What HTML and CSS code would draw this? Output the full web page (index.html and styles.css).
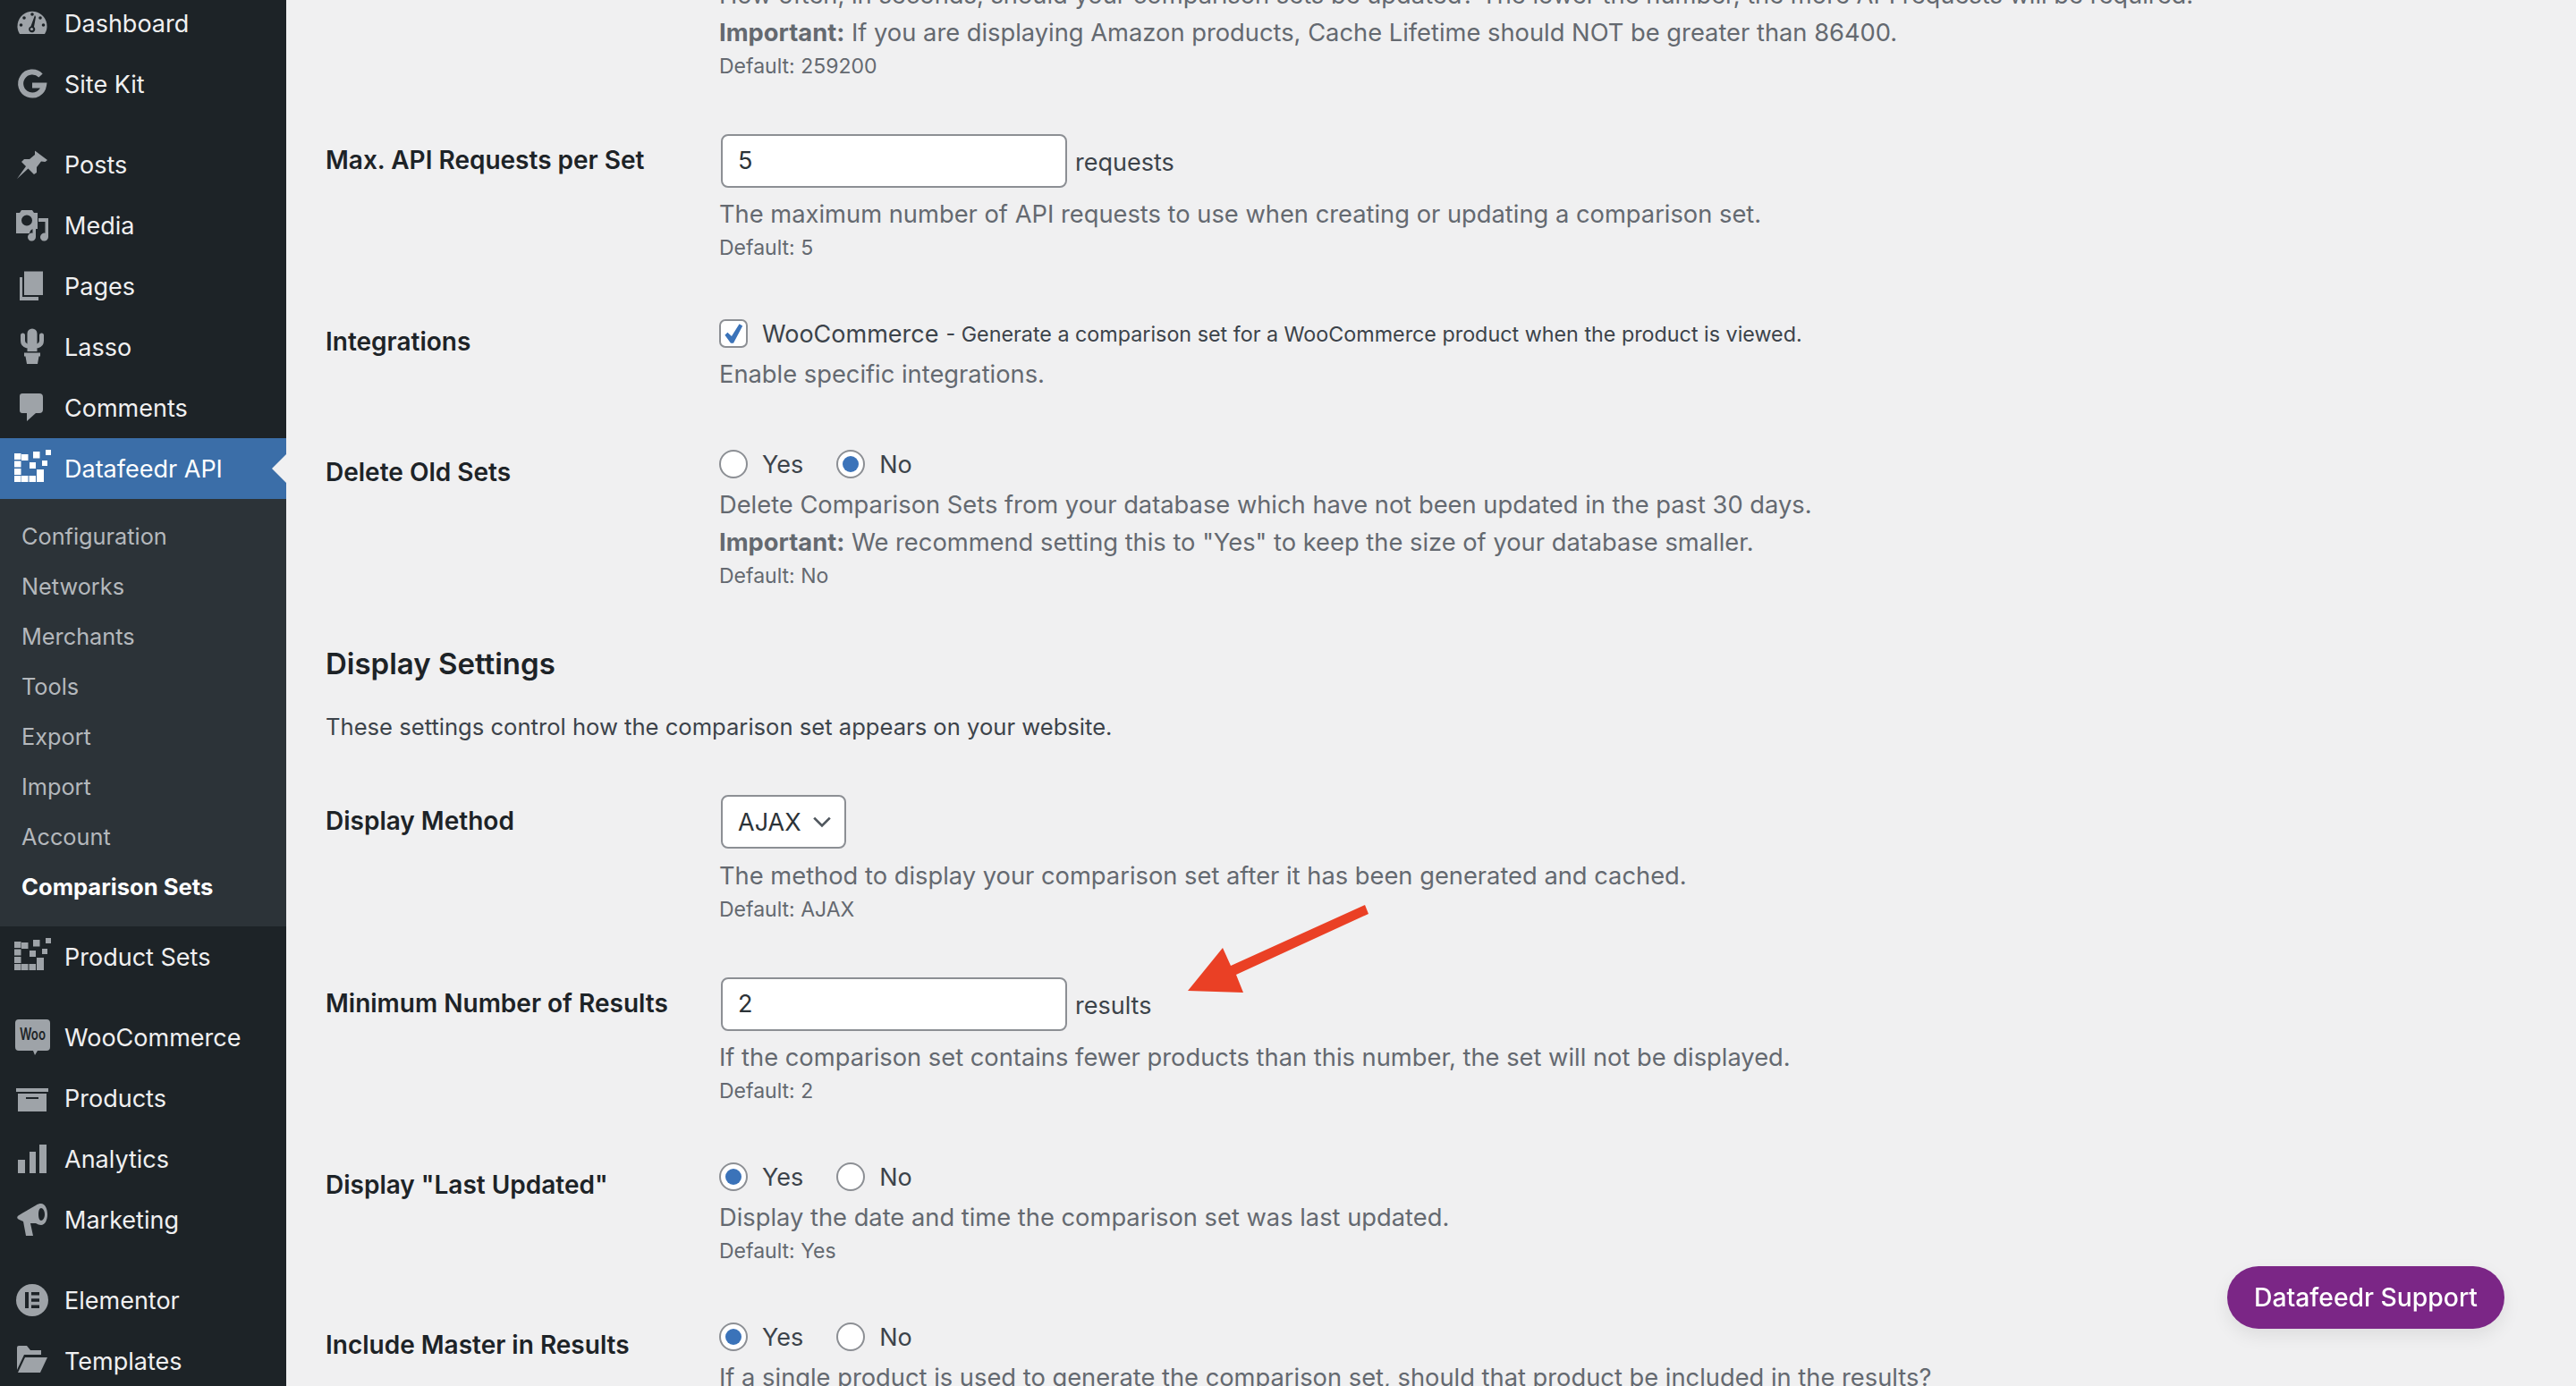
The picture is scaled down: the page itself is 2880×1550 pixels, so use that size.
FILE: index.html
```html
<!DOCTYPE html>
<html lang="en">

<head>
    <meta charset="UTF-8" />
    <title>Comparison Sets</title>
    <link rel="stylesheet" href="styles.css">
</head>

<body>
    <svg class="defs" width="0" height="0">
        <symbol id="pixels" viewBox="0 0 40 40" overflow="visible">
            <rect x="0" y="3" width="7.5" height="7" /><rect x="8" y="4" width="7.5" height="7" />
            <rect x="21" y="1" width="7.5" height="7.5" /><rect x="35" y="-1" width="6" height="6" />
            <rect x="0" y="11.5" width="7.5" height="7" /><rect x="17" y="13" width="7" height="7" />
            <rect x="31" y="11" width="6" height="6" /><rect x="0" y="20" width="7.5" height="7" />
            <rect x="25" y="21" width="8" height="7" /><rect x="0" y="28" width="7.5" height="7" />
            <rect x="8" y="28" width="7.5" height="7" /><rect x="16.5" y="28" width="7.5" height="7" />
            <rect x="25" y="28" width="8" height="7" />
        </symbol>
    </svg>

    <div class="layout">
        <nav class="sidebar">
            <div class="menu-group">
                <a class="menu-item">
                    <svg class="icon" viewBox="0 0 40 40"><path d="M6 32A16.5 16.5 0 1 1 34 32Z" /><g class="cut"><circle cx="20" cy="10" r="1.8" /><circle cx="11" cy="14" r="1.8" /><circle cx="29" cy="14" r="1.8" /><circle cx="7.5" cy="22" r="1.8" /><circle cx="32.5" cy="22" r="1.8" /><path d="M23 11 L24 13 L22 24 A3.6 3.6 0 1 1 18.4 23.4Z" /></g><circle cx="19.5" cy="26.5" r="1.6" /></svg>
                    <span>Dashboard</span>
                </a>
                <a class="menu-item">
                    <svg class="icon" viewBox="0 0 40 40"><path class="stroke" d="M29.5 10.5A13 13 0 1 0 33 21.5H20" stroke-width="6" /></svg>
                    <span>Site Kit</span>
                </a>
            </div>
            <div class="menu-group">
                <a class="menu-item">
                    <svg class="icon" viewBox="0 0 40 40"><path d="M21 3L37 15 34.500 17 30 16.500 25 23 25 29 22 31 15.500 24.500 3 36 13 22 8 17 11 14 17 14 23 9 23 4.500Z" /></svg>
                    <span>Posts</span>
                </a>
                <a class="menu-item">
                    <svg class="icon" viewBox="0 0 40 40"><path fill-rule="evenodd" d="M8 3H20L22 6H26V24H21A6 6 0 0 0 17 29H2V6H6ZM14 8.500A6 6 0 1 0 14 20.500 6 6 0 0 0 14 8.500Z" /><path d="M27 12H38V33A4.500 4.500 0 1 1 34.500 28.700V16H27Z" /><path d="M24 23V33A4.500 4.500 0 1 1 20.500 28.700V23Z" /></svg>
                    <span>Media</span>
                </a>
                <a class="menu-item">
                    <svg class="icon" viewBox="0 0 40 40"><path d="M11 3.500H32V30H11Z" /><path d="M6 10H9V32H27V36H6Z" /></svg>
                    <span>Pages</span>
                </a>
                <a class="menu-item">
                    <svg class="icon" viewBox="0 0 40 40"><path d="M14.500 5A5.500 5.500 0 0 1 25.500 5V25H14.500Z" /><path class="stroke" d="M9.500 7V13A6 6 0 0 0 14 18.800M30.500 7V13A6 6 0 0 1 26 18.800" stroke-width="5" stroke-linecap="round" /><path d="M11 26.500H29V30.500H27.500L26 39H14L12.500 30.500H11Z" /></svg>
                    <span>Lasso</span>
                </a>
                <a class="menu-item">
                    <svg class="icon" viewBox="0 0 40 40"><path d="M9 4H28A4 4 0 0 1 32 8V22A4 4 0 0 1 28 26H24L14 35V26H9A3 3 0 0 1 6 23V7A3 3 0 0 1 9 4Z" /></svg>
                    <span>Comments</span>
                </a>
                <a class="menu-item active">
                    <svg class="icon"><use href="#pixels" /></svg>
                    <span>Datafeedr API</span>
                </a>
                <div class="submenu">
                    <a>Configuration</a>
                    <a>Networks</a>
                    <a>Merchants</a>
                    <a>Tools</a>
                    <a>Export</a>
                    <a>Import</a>
                    <a>Account</a>
                    <a class="current">Comparison Sets</a>
                </div>
                <a class="menu-item">
                    <svg class="icon pixels-dim"><use href="#pixels" /></svg>
                    <span>Product Sets</span>
                </a>
            </div>
            <div class="menu-group">
                <a class="menu-item">
                    <svg class="icon" viewBox="0 0 40 40"><path d="M5 0H36A4 4 0 0 1 40 4V31A4 4 0 0 1 36 35H26L23 40 21 35H5A4 4 0 0 1 1 31V4A4 4 0 0 1 5 0Z" /><text class="woo" x="6" y="23" textLength="29" lengthAdjust="spacingAndGlyphs">Woo</text></svg>
                    <span>WooCommerce</span>
                </a>
                <a class="menu-item">
                    <svg class="icon" viewBox="0 0 40 40"><path d="M2 9H38V13H2Z" /><path fill-rule="evenodd" d="M4 15H36V35H4ZM13 19V21H27V19Z" /></svg>
                    <span>Products</span>
                </a>
                <a class="menu-item">
                    <svg class="icon" viewBox="0 0 40 40"><path d="M4 21H12V36H4ZM17 12H24V36H17ZM28 4H36V36H28Z" /></svg>
                    <span>Analytics</span>
                </a>
                <a class="menu-item">
                    <svg class="icon" viewBox="0 0 40 40"><path fill-rule="evenodd" d="M30 2C34 2 37 7 37 14 37 21 34 26 30 26 28 26 26 25 24 24L18 24 21 38 13 38 10 22 5.500 20C3 19 2.500 17 4.500 15.500 10 12 17 8 24 4 26 2.500 28 2 30 2ZM30 7C28 7 27 10 27 14 27 18 28 21 30 21 32 21 34 18 34 14 34 10 32 7 30 7Z" /></svg>
                    <span>Marketing</span>
                </a>
            </div>
            <div class="menu-group">
                <a class="menu-item">
                    <svg class="icon" viewBox="0 0 40 40"><circle cx="20" cy="20" r="18" /><path class="cut" d="M12 11H16V29H12ZM19 11H28V14.500H19ZM19 18.200H28V21.800H19ZM19 25.500H28V29H19Z" /></svg>
                    <span>Elementor</span>
                </a>
                <a class="menu-item">
                    <svg class="icon" viewBox="0 0 40 40"><path d="M3 30V5A2 2 0 0 1 5 3H14L18 8H30V13H11Z" /><path d="M12 16H37L29 33H4Z" /></svg>
                    <span>Templates</span>
                </a>
            </div>
        </nav>

        <main class="content">
            <section class="row">
                <div class="label"></div>
                <div class="field">
                    <p class="desc">How often, in seconds, should your comparison sets be updated? The lower the number, the more API requests will be required.</p>
                    <p class="desc"><b>Important:</b> If you are displaying Amazon products, Cache Lifetime should NOT be greater than 86400.</p>
                    <p class="default">Default: 259200</p>
                </div>
            </section>

            <section class="row">
                <div class="label">Max. API Requests per Set</div>
                <div class="field">
                    <div class="control-text">
                        <div class="text-input">5</div>
                        <span class="unit">requests</span>
                    </div>
                    <p class="desc">The maximum number of API requests to use when creating or updating a comparison set.</p>
                    <p class="default">Default: 5</p>
                </div>
            </section>

            <section class="row">
                <div class="label">Integrations</div>
                <div class="field">
                    <div class="control-line">
                        <span class="checkbox"><svg viewBox="0 0 20 20"><path d="M15.500 1L18.500 3 10 19H7.500L2 11.500 4.500 9 8.300 12.500Z" /></svg></span>
                        <span class="option">WooCommerce</span>
                        <span class="option-note">- Generate a comparison set for a WooCommerce product when the product is viewed.</span>
                    </div>
                    <p class="desc">Enable specific integrations.</p>
                </div>
            </section>

            <section class="row">
                <div class="label">Delete Old Sets</div>
                <div class="field">
                    <div class="control-line">
                        <span class="radio"></span><span class="option">Yes</span>
                        <span class="radio checked"></span><span class="option">No</span>
                    </div>
                    <p class="desc">Delete Comparison Sets from your database which have not been updated in the past 30 days.</p>
                    <p class="desc"><b>Important:</b> We recommend setting this to "Yes" to keep the size of your database smaller.</p>
                    <p class="default">Default: No</p>
                </div>
            </section>

            <h2 class="section-title">Display Settings</h2>
            <p class="section-intro">These settings control how the comparison set appears on your website.</p>

            <section class="row">
                <div class="label">Display Method</div>
                <div class="field">
                    <div class="select-box">AJAX
                        <svg viewBox="0 0 20 20"><path d="M2 6L10 14 18 6" /></svg>
                    </div>
                    <p class="desc">The method to display your comparison set after it has been generated and cached.</p>
                    <p class="default">Default: AJAX</p>
                </div>
            </section>

            <section class="row">
                <div class="label">Minimum Number of Results</div>
                <div class="field">
                    <div class="control-text">
                        <div class="text-input">2</div>
                        <span class="unit">results</span>
                    </div>
                    <p class="desc">If the comparison set contains fewer products than this number, the set will not be displayed.</p>
                    <p class="default">Default: 2</p>
                </div>
            </section>

            <section class="row">
                <div class="label">Display "Last Updated"</div>
                <div class="field">
                    <div class="control-line">
                        <span class="radio checked"></span><span class="option">Yes</span>
                        <span class="radio"></span><span class="option">No</span>
                    </div>
                    <p class="desc">Display the date and time the comparison set was last updated.</p>
                    <p class="default">Default: Yes</p>
                </div>
            </section>

            <section class="row">
                <div class="label">Include Master in Results</div>
                <div class="field">
                    <div class="control-line">
                        <span class="radio checked"></span><span class="option">Yes</span>
                        <span class="radio"></span><span class="option">No</span>
                    </div>
                    <p class="desc">If a single product is used to generate the comparison set, should that product be included in the results?</p>
                </div>
            </section>
        </main>
    </div>

    <svg class="arrow" viewBox="1320 1005 220 115"><path d="M1526 1012L1530 1022 1382 1090 1390 1110 1328 1108 1367 1060 1376 1080Z" /></svg>

    <a class="support">Datafeedr Support</a>
</body>

</html>
```

FILE: styles.css
```css
html,
body {
    margin: 0;
    padding: 0;
    height: 100%;
    overflow: hidden;
    font-family: Inter, "Liberation Sans", sans-serif;
    background-color: #f0f0f1;
    color: #1d2327;
}

.defs {
    position: absolute;
}

.layout {
    display: flex;
    height: 100vh;
    overflow: hidden;
}

/* sidebar */
.sidebar {
    flex: 0 0 320px;
    background-color: #1d2327;
    color: #f0f0f1;
    margin-top: -8px;
    font-size: 27px;
}

.menu-group {
    margin-bottom: 22px;
}

.menu-item {
    display: flex;
    align-items: center;
    gap: 16px;
    height: 68px;
    padding-left: 16px;
    position: relative;
}

.icon {
    width: 40px;
    height: 40px;
    flex: none;
    fill: #9ea3a8;
    overflow: visible;
}

.icon .cut {
    fill: #1d2327;
}

.icon .stroke {
    fill: none;
    stroke: #9ea3a8;
}

.woo {
    font-family: Inter, sans-serif;
    font-size: 18px;
    font-weight: 600;
    fill: #1d2327;
}

.menu-item.active {
    background-color: #3b6ea8;
    color: white;
}

.menu-item.active .icon {
    fill: white;
}

.menu-item.active::after {
    content: "";
    position: absolute;
    right: 0;
    top: 18px;
    border: 16px solid transparent;
    border-left: 0;
    border-right-color: #f0f0f1;
}

.submenu {
    background-color: #2c3338;
    padding: 14px 0 16px;
}

.submenu a {
    display: block;
    height: 56px;
    line-height: 56px;
    padding-left: 24px;
    font-size: 25.300px;
    color: #b4b8bc;
}

.submenu a.current {
    color: white;
    font-weight: 700;
    font-size: 25.600px;
}

/* settings */
.content {
    flex: 1;
    padding: 0 44px;
    margin-top: -56px;
    min-width: 0;
}

.row {
    display: grid;
    grid-template-columns: 440px 1fr;
    padding: 29px 0;
}

.label {
    padding-top: 9px;
    line-height: 40px;
    font-size: 28px;
    font-weight: 600;
}

.field {
    min-width: 0;
}

p {
    margin: 0;
}

.desc {
    font-size: 27.300px;
    line-height: 40px;
    color: #646970;
    margin-top: 2px;
    white-space: nowrap;
}

.field > .desc:last-child {
    margin-bottom: 2px;
}

.desc b {
    font-weight: 700;
}

.default {
    margin-top: -1px;
    font-size: 23px;
    line-height: 36px;
    color: #646970;
}

.control-text {
    display: flex;
    align-items: center;
    gap: 9px;
    margin-bottom: 10px;
}

.text-input {
    box-sizing: border-box;
    width: 387px;
    height: 60px;
    margin-left: 2px;
    padding-left: 17px;
    line-height: 56px;
    font-size: 27px;
    color: #2c3338;
    background-color: white;
    border: 2px solid #8c8f94;
    border-radius: 8px;
}

.unit {
    font-size: 27px;
    color: #3c434a;
    padding-top: 2px;
}

.control-line {
    display: flex;
    align-items: center;
    height: 40px;
    margin-bottom: 6px;
    font-size: 27px;
    color: #3c434a;
}

.checkbox,
.radio {
    box-sizing: border-box;
    width: 32px;
    height: 32px;
    flex: none;
    background-color: white;
    border: 2px solid #8c8f94;
    margin-right: 16px;
}

.checkbox {
    border-radius: 7px;
    padding: 2px;
}

.checkbox svg {
    display: block;
    fill: #3b73b9;
}

.radio {
    border-radius: 50%;
}

.radio.checked {
    position: relative;
}

.radio.checked::after {
    content: "";
    position: absolute;
    left: 5px;
    top: 5px;
    width: 18px;
    height: 18px;
    border-radius: 50%;
    background-color: #3b73b9;
}

.option + .radio {
    margin-left: 37px;
}

.option-note {
    font-size: 23.300px;
    margin-left: 8px;
}

.select-box {
    box-sizing: border-box;
    display: flex;
    align-items: center;
    gap: 12px;
    width: 140px;
    height: 60px;
    margin-left: 2px;
    padding-left: 17px;
    margin-bottom: 11px;
    font-size: 27px;
    color: #2c3338;
    background-color: white;
    border: 2px solid #8c8f94;
    border-radius: 8px;
}

.select-box svg {
    width: 22px;
    height: 22px;
    fill: none;
    stroke: #50575e;
    stroke-width: 2.500;
}

.section-title {
    margin: 29px 0 0;
    font-size: 33px;
    line-height: 44px;
    font-weight: 600;
}

.section-intro {
    margin-top: 29px;
    margin-bottom: 27px;
    font-size: 25.600px;
    line-height: 40px;
    color: #3c434a;
}

/* things on top of the page */
.arrow {
    position: absolute;
    left: 1320px;
    top: 1005px;
    width: 220px;
    height: 115px;
    fill: #ea4025;
}

.support {
    position: fixed;
    left: 2490px;
    top: 1416px;
    width: 310px;
    height: 70px;
    line-height: 70px;
    text-align: center;
    border-radius: 35px;
    background-color: #7b2686;
    color: white;
    font-size: 28.300px;
    font-weight: 500;
    box-shadow: 0 8px 20px rgba(0, 0, 0, 0.08);
}
```
